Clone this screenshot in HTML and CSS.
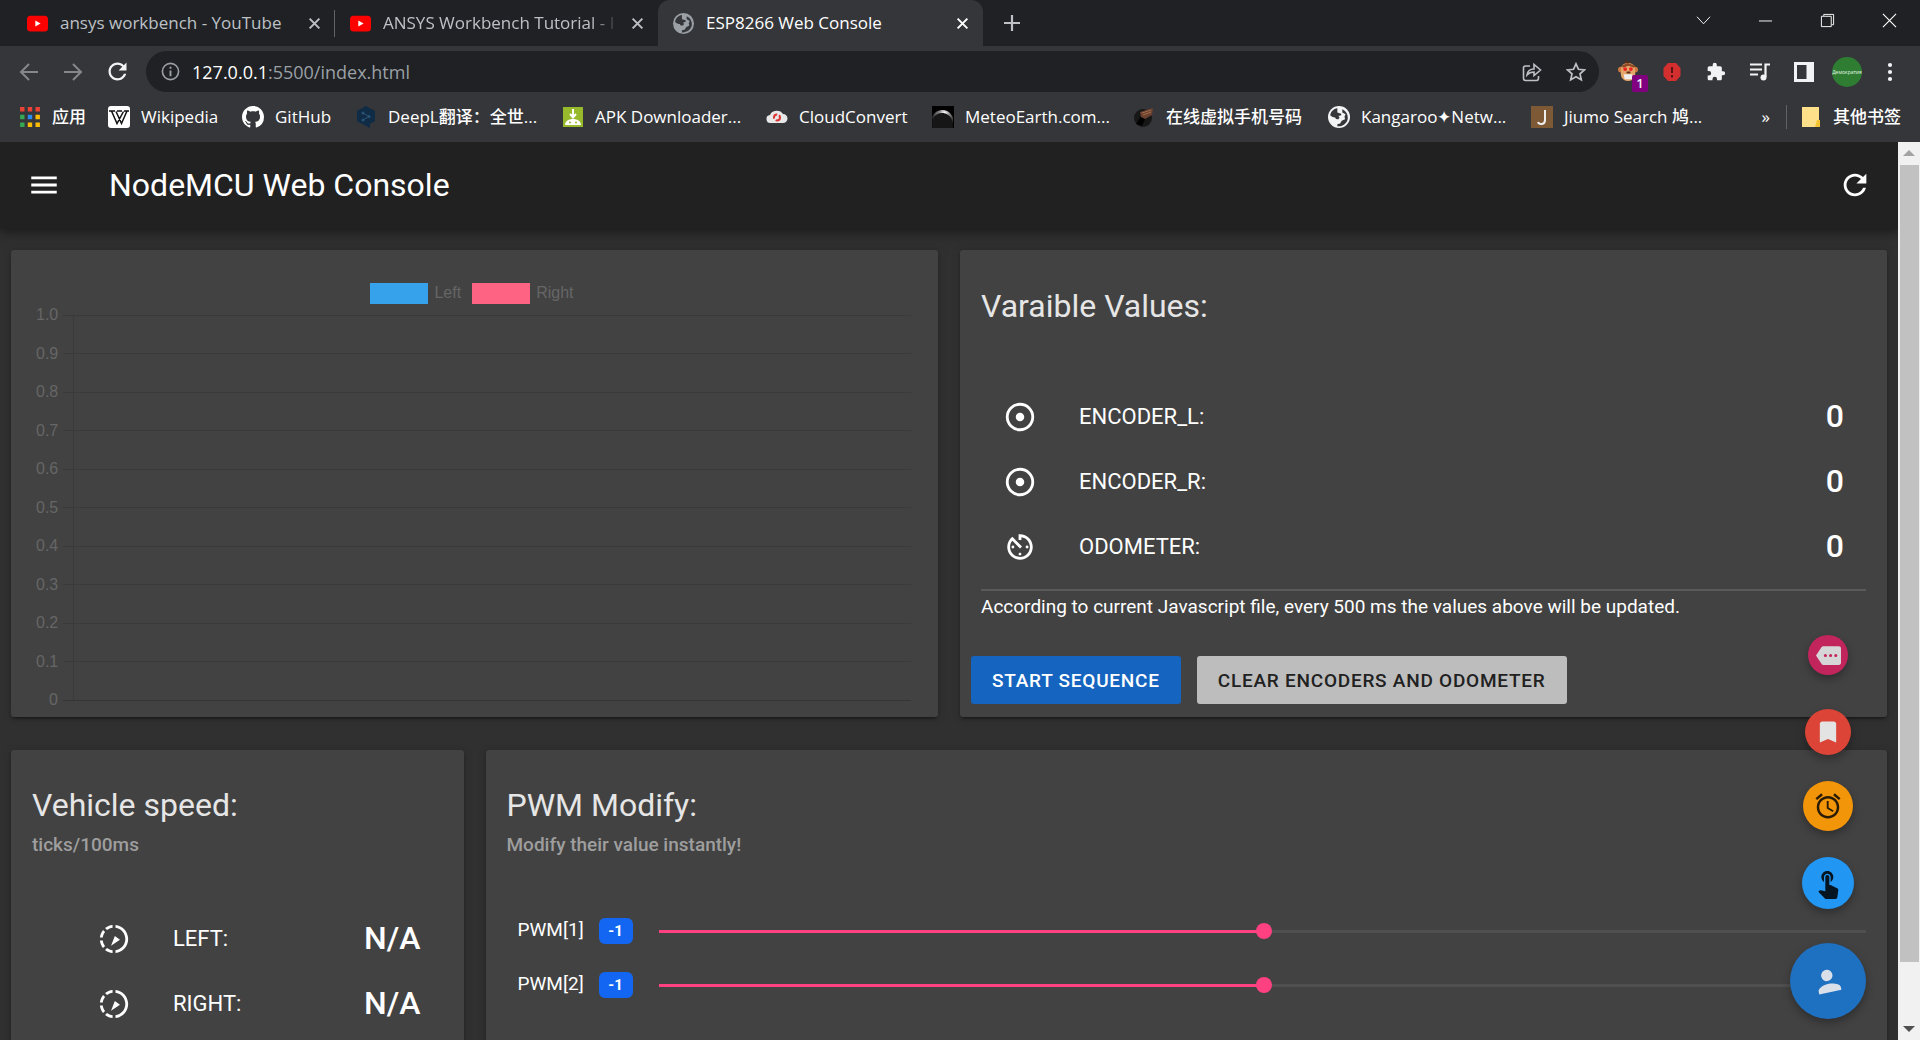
FILE: index.html
```html
<!DOCTYPE html>
<html lang="en">
<head>
<meta charset="utf-8">
<title>ESP8266 Web Console</title>
<link rel="stylesheet" href="styles.css">
</head>
<body>
<svg class="defs" aria-hidden="true">
  <defs>
    <symbol id="youtube" viewBox="0 0 24 24"><rect y="3" width="24" height="18" rx="4" fill="#f00"/><path d="M9.500 8.500v7l6-3.500z" fill="#fff"/></symbol>
    <symbol id="cross" viewBox="0 0 12 12"><path d="M1.500 1.500l9 9m0-9l-9 9" fill="none" stroke="currentColor" stroke-width="1.800"/></symbol>
    <symbol id="globe" viewBox="0 0 20 20"><circle cx="10" cy="10" r="10" fill="currentColor"/><path d="M8.500 2c-3.500.6-6 3-6.500 6.500 1.500 1.500 3 1.800 4.500 2 .4 1.500 1.500 1.500 3 1.500l1-1.500-1-1.500 2.500-.5V7L8.500 6zM13 3v3l3 1.500-1 2 .5 2.500-3 1.500-1.500 2.500-2.500.5v2c4.500.3 8.500-2.500 9.400-6.500C18.500 8 16.500 4.500 13 3z" class="globe-land"/></symbol>
    <symbol id="refresh" viewBox="0 0 24 24"><path fill="currentColor" d="M17.650 6.350C16.200 4.900 14.210 4 12 4c-4.420 0-7.990 3.580-7.990 8s3.570 8 7.990 8c3.730 0 6.840-2.550 7.730-6h-2.080c-.820 2.330-3.040 4-5.650 4-3.310 0-6-2.690-6-6s2.690-6 6-6c1.660 0 3.140.690 4.220 1.780L13 11h7V4l-2.350 2.350z"/></symbol>
    <symbol id="adjust" viewBox="0 0 24 24"><circle cx="12" cy="12" r="9" fill="none" stroke="currentColor" stroke-width="2"/><circle cx="12" cy="12" r="3" fill="currentColor"/></symbol>
    <symbol id="slow" viewBox="0 0 24 24"><path fill="currentColor" d="M11 4.070V2.050c-2.010.200-3.840 1-5.320 2.210L7.100 5.690c1.110-.860 2.440-1.440 3.900-1.620zM5.690 7.100L4.260 5.680C3.050 7.160 2.250 8.990 2.050 11h2.020c.180-1.460.760-2.790 1.620-3.900zM4.070 13H2.050c.200 2.010 1 3.840 2.210 5.320l1.430-1.430c-.860-1.100-1.440-2.430-1.620-3.890zm1.610 6.740C7.160 20.950 9 21.750 11 21.950v-2.020c-1.460-.180-2.790-.760-3.900-1.620l-1.420 1.430zM22 12c0 5.160-3.920 9.420-8.950 9.950v-2.020C16.970 19.410 20 16.050 20 12s-3.030-7.410-6.950-7.930V2.050C18.080 2.580 22 6.840 22 12zM9.900 16.800l2.700-7 3.600 2.700z"/></symbol>
  </defs>
</svg>

<div class="browser">
  <div class="tabstrip">
    <div class="tab tab-split">
      <svg class="favicon"><use href="#youtube"/></svg>
      <span class="tab-title">ansys workbench - YouTube</span>
      <button class="tab-close" aria-label="Close tab"><svg><use href="#cross"/></svg></button>
    </div>
    <div class="tab">
      <svg class="favicon"><use href="#youtube"/></svg>
      <span class="tab-title tab-fade">ANSYS Workbench Tutorial - I</span>
      <button class="tab-close" aria-label="Close tab"><svg><use href="#cross"/></svg></button>
    </div>
    <div class="tab tab-active">
      <svg class="favicon globe-grey"><use href="#globe"/></svg>
      <span class="tab-title">ESP8266 Web Console</span>
      <button class="tab-close" aria-label="Close tab"><svg><use href="#cross"/></svg></button>
    </div>
    <button class="new-tab" aria-label="New tab"><svg viewBox="0 0 16 16"><path d="M8 0v16M0 8h16" stroke="currentColor" stroke-width="2.200"/></svg></button>
    <div class="window-controls">
      <button aria-label="Search tabs"><svg viewBox="0 0 16 16"><path d="M1 4l7 7.500L15 4" fill="none" stroke="currentColor"/></svg></button>
      <button aria-label="Minimise"><svg viewBox="0 0 16 16"><path d="M1 8.500h14" stroke="currentColor"/></svg></button>
      <button aria-label="Restore"><svg viewBox="0 0 16 16"><path d="M1.500 3.500h10.500v11H1.500zM4 3V1.500h10.500v11H12.500" fill="none" stroke="currentColor"/></svg></button>
      <button aria-label="Close window"><svg viewBox="0 0 16 16"><path d="M1 1l14 14M15 1L1 15" stroke="currentColor" stroke-width="1.200"/></svg></button>
    </div>
  </div>

  <div class="toolbar">
    <button class="tool dim" aria-label="Back"><svg viewBox="0 0 20 20"><path d="M19 10H2m8-8l-8 8 8 8" fill="none" stroke="currentColor" stroke-width="2"/></svg></button>
    <button class="tool dim" aria-label="Forward"><svg viewBox="0 0 20 20"><path d="M1 10h17m-8-8l8 8-8 8" fill="none" stroke="currentColor" stroke-width="2"/></svg></button>
    <button class="tool reload" aria-label="Reload"><svg><use href="#refresh"/></svg></button>
    <div class="omnibox">
      <svg class="info" viewBox="0 0 20 20"><circle cx="10" cy="10" r="8.500" fill="none" stroke="currentColor" stroke-width="1.700"/><path d="M10 9v6M10 5v2" stroke="currentColor" stroke-width="2"/></svg>
      <span class="url"><b>127.0.0.1</b>:5500/index.html</span>
      <button class="tool light" aria-label="Share"><svg viewBox="0 0 20 20"><path d="M8 4H3.500C2 4 1.500 4.500 1.500 6v10c0 1.500.5 2.500 2 2.500h11c1.500 0 2-1 2-2.500v-2M5 13c.5-4 3-6 7-6V2.500L18.500 8 12 13.500V10c-3 0-5 .7-7 3z" fill="none" stroke="currentColor" stroke-width="1.600"/></svg></button>
      <button class="tool light" aria-label="Bookmark this page"><svg viewBox="0 0 20 20"><path d="M10 1.800l2.500 5.500 6 .6-4.500 4 1.300 5.900L10 14.700l-5.300 3.100L6 11.900l-4.500-4 6-.6z" fill="none" stroke="currentColor" stroke-width="1.700"/></svg></button>
    </div>
    <button class="tool monkey" aria-label="Extension, 1 active">
      <svg viewBox="0 0 22 24"><path d="M9 0l2 3 3-2-1 3h-4L6 3z" fill="#5a2d17"/><circle cx="3" cy="10" r="3" fill="#c9793f"/><circle cx="18" cy="10" r="3" fill="#c9793f"/><rect x="3" y="3" width="15" height="19" rx="7" fill="#e5a66a"/><path d="M4 6l6-3 8 3-1 2-6-2-6 2z" fill="#8c4a24"/><circle cx="7.500" cy="9.500" r="2" fill="#e22"/><circle cx="13.500" cy="9.500" r="2" fill="#e22"/><path d="M6 15h9v5H7z" fill="#eee"/><path d="M9 13h4" stroke="#5a2d17" stroke-width="2"/></svg>
      <span class="badge-count">1</span>
    </button>
    <button class="tool" aria-label="Blocked"><svg viewBox="0 0 20 20"><path d="M6 1h8l4.500 5v8L14 19H6l-4.500-5V6z" fill="#d32f2f"/><path d="M10 5v6m0 2v2.500" stroke="#5b1414" stroke-width="2"/></svg></button>
    <button class="tool" aria-label="Extensions"><svg viewBox="0 0 24 24"><path fill="currentColor" d="M20.500 11H19V7c0-1.100-.9-2-2-2h-4V3.500a2.500 2.500 0 0 0-5 0V5H4c-1.100 0-2 .9-2 2v3.800h1.500a2.700 2.700 0 0 1 0 5.400H2V20c0 1.100.9 2 2 2h3.800v-1.500a2.700 2.700 0 0 1 5.400 0V22H17c1.100 0 2-.9 2-2v-4h1.500a2.500 2.500 0 0 0 0-5z"/></svg></button>
    <button class="tool" aria-label="Media"><svg viewBox="0 0 20 20"><path d="M0 2.500h12M0 7.500h12M0 12.500h8M15.500 15V2.500H20" fill="none" stroke="currentColor" stroke-width="2.200"/><circle cx="13.500" cy="15.500" r="3" fill="currentColor"/></svg></button>
    <button class="tool" aria-label="Side panel"><svg viewBox="0 0 20 20"><path fill="currentColor" fill-rule="evenodd" d="M0 0h20v20H0zM3 3v14h9.500V3z"/></svg></button>
    <button class="avatar" aria-label="Profile">Демократия</button>
    <button class="tool dots" aria-label="Menu"><svg viewBox="0 0 20 20"><g fill="currentColor"><circle cx="10" cy="3" r="2.100"/><circle cx="10" cy="10" r="2.100"/><circle cx="10" cy="17" r="2.100"/></g></svg></button>
  </div>

  <nav class="bookmarks">
    <a href="#"><svg viewBox="0 0 20 20"><path d="M1 1h4v4H1zM8 1h4v4H8zM15 1h4v4h-4z" fill="#ea4335"/><path d="M1 8h4v4H1zM1 15h4v4H1z" fill="#34a853"/><path d="M8 8h4v4H8z" fill="#2b8af0"/><path d="M15 8h4v4h-4zM8 15h4v4H8zM15 15h4v4h-4z" fill="#fbbc04"/></svg><span>应用</span></a>
    <a href="#"><svg viewBox="0 0 22 22"><rect width="22" height="22" rx="3" fill="#fff"/><path d="M1 5h6M9 5h5M16 5h5M3.500 5l5.500 12.500L15.500 5.500M8 5.500L13.500 17.500 19 5" fill="none" stroke="#111" stroke-width="1.500"/></svg><span>Wikipedia</span></a>
    <a href="#"><svg viewBox="0 0 16 16"><path fill="#fff" d="M8 0C3.580 0 0 3.580 0 8c0 3.540 2.290 6.530 5.470 7.590.400.070.550-.170.550-.380 0-.190-.010-.820-.010-1.490-2.010.370-2.530-.490-2.690-.940-.090-.230-.480-.940-.820-1.130-.280-.150-.680-.520-.010-.530.630-.010 1.080.580 1.230.820.720 1.210 1.870.870 2.330.660.070-.520.280-.870.510-1.070-1.780-.200-3.640-.890-3.640-3.950 0-.870.310-1.590.820-2.150-.080-.200-.360-1.020.080-2.120 0 0 .670-.210 2.200.820.640-.180 1.320-.270 2-.270s1.360.090 2 .270c1.530-1.040 2.200-.820 2.200-.820.440 1.100.160 1.920.080 2.120.510.560.820 1.270.820 2.150 0 3.070-1.870 3.750-3.650 3.950.290.250.540.730.540 1.480 0 1.070-.010 1.930-.010 2.200 0 .210.150.460.550.380A8.010 8.010 0 0 0 16 8c0-4.420-3.580-8-8-8z"/></svg><span>GitHub</span></a>
    <a href="#"><svg viewBox="0 0 22 22"><path d="M11 0l9 5v10l-5 3v4l-4-2-9-5V5z" fill="#0f2b46"/><path d="M8 7l6 3.500L8 14" fill="none" stroke="#2c5273"/><g fill="#2c5273"><circle cx="8" cy="7" r="1.500"/><circle cx="14" cy="10.500" r="1.500"/><circle cx="8" cy="14" r="1.500"/></g></svg><span>DeepL翻译：全世...</span></a>
    <a href="#"><svg viewBox="0 0 22 22"><rect x="1" y="1" width="20" height="20" fill="#97b92c"/><path d="M11 3v7M8 8l3 3.500L14 8" stroke="#fff" stroke-width="2" fill="none"/><path d="M3 19c0-8 16-8 16 0z" fill="#fff"/><circle cx="8" cy="16.500" r="1" fill="#97b92c"/><circle cx="14" cy="16.500" r="1" fill="#97b92c"/></svg><span>APK Downloader...</span></a>
    <a href="#"><svg viewBox="0 0 22 22"><path d="M5 17a4 4 0 0 1-1-8 7 6 0 0 1 13-1 4.500 4.500 0 0 1 0 9z" fill="#e8e8e8"/><circle cx="11" cy="11.500" r="3" fill="none" stroke="#d33" stroke-width="2" stroke-dasharray="6 2"/></svg><span>CloudConvert</span></a>
    <a href="#"><svg viewBox="0 0 22 22"><defs><radialGradient id="moon" cx=".6" cy=".15" r=".7"><stop offset="0" stop-color="#fff"/><stop offset=".35" stop-color="#888"/><stop offset="1" stop-color="#111"/></radialGradient></defs><rect width="22" height="22" fill="#000"/><path d="M0 22V11C4 2 17 1 21 12v10z" fill="url(#moon)"/><path d="M1 22V13C5 5 16 5 20 14v8z" fill="#161616"/></svg><span>MeteoEarth.com...</span></a>
    <a href="#"><svg viewBox="0 0 22 22"><circle cx="10" cy="12" r="9" fill="#171717"/><path d="M3 18L9 9l4 2-4 9z" fill="#000"/><path d="M7 6l13-4-1 7-7 4-4-2z" fill="#6b4230"/><path d="M9 7l9-3M10 9l8-3" stroke="#a36a4a"/></svg><span>在线虚拟手机号码</span></a>
    <a href="#"><svg class="globe-white"><use href="#globe"/></svg><span>Kangaroo✦Netw...</span></a>
    <a href="#"><svg viewBox="0 0 22 22"><rect width="22" height="22" fill="#7d5a35"/><path d="M14 4v10c0 5-6 5-7 2" fill="none" stroke="#eee" stroke-width="2"/></svg><span>Jiumo Search 鸠...</span></a>
    <button class="more" aria-label="More bookmarks">»</button>
    <a class="other" href="#"><svg viewBox="0 0 22 22"><path d="M2 1h17v15h-2v5H2z" fill="#ffe08a"/><path d="M17 14h3v7h-5z" fill="#f4c430"/></svg><span>其他书签</span></a>
  </nav>
</div>

<div class="viewport">
  <div class="page">
    <header class="appbar">
      <button class="icon-button" aria-label="Open menu"><svg viewBox="0 0 24 24"><path fill="currentColor" d="M3 18h18v-2H3v2zm0-5h18v-2H3v2zm0-7v2h18V6H3z"/></svg></button>
      <h1>NodeMCU Web Console</h1>
      <button class="icon-button" aria-label="Refresh"><svg><use href="#refresh"/></svg></button>
    </header>

    <main class="content">
      <section class="card chart" aria-label="Wheel speed chart">
        <div class="legend">
          <span class="swatch swatch-left"></span><span>Left</span>
          <span class="swatch swatch-right"></span><span>Right</span>
        </div>
        <ul class="axis">
          <li>1.0</li><li>0.9</li><li>0.8</li><li>0.7</li><li>0.6</li><li>0.5</li><li>0.4</li><li>0.3</li><li>0.2</li><li>0.1</li><li>0</li>
        </ul>
      </section>

      <section class="card values">
        <h2>Varaible Values:</h2>
        <ul class="readings">
          <li><svg><use href="#adjust"/></svg><span>ENCODER_L:</span><strong>0</strong></li>
          <li><svg><use href="#adjust"/></svg><span>ENCODER_R:</span><strong>0</strong></li>
          <li><svg viewBox="0 0 24 24"><path fill="currentColor" d="M11 17c0 .550.450 1 1 1s1-.450 1-1-.450-1-1-1-1 .450-1 1zm0-14v4h2V5.080c3.390.490 6 3.390 6 6.920 0 3.870-3.130 7-7 7s-7-3.130-7-7c0-1.680.590-3.220 1.580-4.420L12 13l1.410-1.410-6.800-6.800v.020C4.420 6.450 3 9.050 3 12c0 4.970 4.020 9 9 9 4.970 0 9-4.030 9-9s-4.030-9-9-9h-1zm7 9c0-.550-.450-1-1-1s-1 .450-1 1 .450 1 1 1 1-.450 1-1zM6 12c0 .550.450 1 1 1s1-.450 1-1-.450-1-1-1-1 .450-1 1z"/></svg><span>ODOMETER:</span><strong>0</strong></li>
        </ul>
        <p class="note">According to current Javascript file, every 500 ms the values above will be updated.</p>
        <div class="actions">
          <button class="btn btn-primary">START SEQUENCE</button>
          <button class="btn">CLEAR ENCODERS AND ODOMETER</button>
        </div>
      </section>

      <section class="card speed">
        <h2>Vehicle speed:</h2>
        <p class="subtitle">ticks/100ms</p>
        <ul class="readings">
          <li><svg><use href="#slow"/></svg><span>LEFT:</span><strong>N/A</strong></li>
          <li><svg><use href="#slow"/></svg><span>RIGHT:</span><strong>N/A</strong></li>
        </ul>
      </section>

      <section class="card pwm">
        <h2>PWM Modify:</h2>
        <p class="subtitle">Modify their value instantly!</p>
        <div class="sliders">
          <div class="slider-row"><label for="pwm1">PWM[1]</label><output for="pwm1">-1</output><input id="pwm1" type="range" min="-500" max="495" value="-1"></div>
          <div class="slider-row"><label for="pwm2">PWM[2]</label><output for="pwm2">-1</output><input id="pwm2" type="range" min="-500" max="495" value="-1"></div>
        </div>
      </section>
    </main>

    <div class="fabs">
      <button class="fab fab-more" aria-label="More"><svg viewBox="0 0 24 24"><path fill="currentColor" fill-rule="evenodd" d="M22 3H7c-.690 0-1.230.350-1.590.880L0 12l5.410 8.110c.360.530.970.890 1.660.890H22c1.100 0 2-.900 2-2V5c0-1.100-.900-2-2-2zM9 13.500a1.500 1.500 0 1 1 0-3 1.500 1.500 0 0 1 0 3zm5 0a1.500 1.500 0 1 1 0-3 1.500 1.500 0 0 1 0 3zm5 0a1.500 1.500 0 1 1 0-3 1.500 1.500 0 0 1 0 3z"/></svg></button>
      <button class="fab fab-bookmark" aria-label="Bookmark"><svg viewBox="0 0 24 24"><path fill="currentColor" d="M17 3H7c-1.100 0-1.990.900-1.990 2L5 21l7-3 7 3V5c0-1.100-.900-2-2-2z"/></svg></button>
      <button class="fab fab-alarm" aria-label="Alarm"><svg viewBox="0 0 24 24"><path fill="currentColor" d="M22 5.720l-4.600-3.860-1.290 1.530 4.600 3.860L22 5.720zM7.880 3.390L6.600 1.860 2 5.710l1.290 1.530 4.590-3.850zM12.500 8H11v6l4.750 2.850.750-1.230-4-2.370V8zM12 4c-4.970 0-9 4.030-9 9s4.020 9 9 9c4.970 0 9-4.030 9-9s-4.030-9-9-9zm0 16c-3.870 0-7-3.130-7-7s3.130-7 7-7 7 3.130 7 7-3.130 7-7 7z"/></svg></button>
      <button class="fab fab-touch" aria-label="Touch"><svg viewBox="0 0 24 24"><path fill="currentColor" d="M9 11.240V7.500C9 6.120 10.120 5 11.500 5S14 6.120 14 7.500v3.740c1.210-.810 2-2.180 2-3.740C16 5.010 13.990 3 11.500 3S7 5.010 7 7.500c0 1.560.790 2.930 2 3.740zm9.840 4.630l-4.540-2.260c-.170-.070-.350-.110-.540-.110H13v-6c0-.830-.670-1.500-1.500-1.500S10 6.670 10 7.500v10.740l-3.430-.720c-.080-.010-.150-.030-.240-.030-.310 0-.590.130-.790.330l-.790.800 4.940 4.940c.270.270.650.440 1.060.440h6.790c.750 0 1.330-.550 1.440-1.280l.750-5.270c.010-.070.020-.140.020-.200 0-.620-.380-1.160-.910-1.380z"/></svg></button>
      <button class="fab fab-main" aria-label="Account"><svg viewBox="0 0 24 24"><path transform="rotate(-12 12 12)" fill="currentColor" d="M12 12c2.210 0 4-1.790 4-4s-1.790-4-4-4-4 1.790-4 4 1.790 4 4 4zm0 2c-2.670 0-8 1.340-8 4v2h16v-2c0-2.660-5.330-4-8-4z"/></svg></button>
    </div>
  </div>
  <div class="scrollbar" aria-hidden="true">
    <svg viewBox="0 0 22 22"><path d="M5 14l6-6 6 6z" fill="#a3a3a3"/></svg>
    <div class="scroll-track"><div class="scroll-thumb"></div></div>
    <svg viewBox="0 0 22 22"><path d="M5 8l6 6 6-6z" fill="#505050"/></svg>
  </div>
</div>
</body>
</html>
```
FILE: styles.css
```css
* { box-sizing: border-box; }

body {
  margin: 0;
  height: 100vh;
  overflow: hidden;
  display: flex;
  flex-direction: column;
  background: #303030;
  color: #fff;
  font-family: Roboto, "Noto Sans CJK SC", sans-serif;
}

h1, h2, p, ul { margin: 0; padding: 0; font-weight: 400; }
ul { list-style: none; }
svg { display: block; flex: none; }
.defs { position: absolute; width: 0; height: 0; }

button {
  padding: 0;
  border: 0;
  background: none;
  color: inherit;
  font: inherit;
}

/* Browser frame */
.browser {
  flex: none;
  background: #35363a;
  font-family: "Open Sans", "Noto Sans CJK SC", sans-serif;
  font-size: 17px;
  line-height: 24px;
}

.tabstrip {
  display: flex;
  height: 46px;
  padding-left: 12px;
  background: #202124;
}

.tab {
  position: relative;
  display: flex;
  align-items: center;
  width: 323px;
  padding: 0 10px 0 15px;
  color: #bdc1c6;
}

.tab-split::after {
  content: "";
  position: absolute;
  right: 0;
  top: 10px;
  width: 1px;
  height: 27px;
  background: #5f6368;
}

.tab-active {
  width: 325px;
  border-radius: 12px 12px 0 0;
  background: #35363a;
  color: #fff;
  font-weight: 500;
}

.favicon { width: 21px; height: 21px; margin-right: 12px; }
.globe-grey { color: #9aa0a6; fill: #35363a; }
.globe-white { color: #f1f3f4; fill: #35363a; }
.tab-title { flex: 1; white-space: nowrap; }
.tab-fade { mask-image: linear-gradient(90deg, #000 88%, transparent); }
.tab-close { display: flex; padding: 4px; margin-left: 8px; }
.tab-close svg { width: 13px; height: 13px; }
.new-tab { display: flex; align-items: center; padding: 0 21px; color: #bdc1c6; }
.new-tab svg { width: 16px; height: 16px; }
.window-controls { display: flex; height: 40px; margin-left: auto; }
.window-controls button { display: flex; align-items: center; justify-content: center; width: 62px; }
.window-controls svg { width: 15px; height: 15px; }

.toolbar {
  display: flex;
  align-items: center;
  height: 51px;
  padding: 0 8px 0 7px;
}

.tool {
  position: relative;
  display: flex;
  align-items: center;
  justify-content: center;
  flex: none;
  width: 44px;
  height: 41px;
  color: #f1f3f4;
}

.tool svg { width: 20px; height: 20px; }
.tool.reload svg { width: 27px; height: 27px; }
.tool.dim { color: #85878a; }
.tool.light { color: #bdc1c6; }
.tool.monkey { width: 43px; margin-left: 8px; }
.monkey svg { width: 21px; height: 23px; }

.badge-count {
  position: absolute;
  left: 25px;
  bottom: 0;
  width: 16px;
  height: 17px;
  border-radius: 2px;
  background: #800080;
  font-size: 13px;
  font-weight: 600;
  line-height: 17px;
}

.omnibox {
  display: flex;
  align-items: center;
  flex: 1;
  height: 41px;
  margin-left: 7px;
  padding: 0 1px 0 15px;
  border-radius: 21px;
  background: #202124;
}

.info { width: 19px; height: 19px; color: #9aa0a6; }
.url { flex: 1; margin-left: 12px; color: #9aa0a6; font-size: 18px; }
.url b { color: #fff; font-weight: 500; }

.avatar {
  width: 30px;
  height: 30px;
  margin: 0 6px;
  border-radius: 50%;
  background: #2e7d32;
  color: #e8f5e9;
  font-size: 5px;
  line-height: 30px;
  overflow: hidden;
}

.bookmarks {
  display: grid;
  grid-template-columns: 89px 134px 113px 207px 204px 166px 201px 195px 203px 210px 1fr auto;
  align-items: center;
  height: 45px;
  padding: 0 19px 5px;
  font-weight: 500;
}

.bookmarks a {
  display: flex;
  align-items: center;
  gap: 11px;
  color: #fff;
  text-decoration: none;
  white-space: nowrap;
}

.bookmarks svg { width: 22px; height: 22px; }
.bookmarks .more { justify-self: end; padding-right: 16px; }
.bookmarks .other { padding-left: 13px; border-left: 1px solid #5f6368; }

/* Page viewport */
.viewport { display: flex; flex: 1; min-height: 0; }
.page { position: relative; flex: 1; min-width: 0; overflow: hidden; }

.scrollbar {
  display: flex;
  flex-direction: column;
  width: 22px;
  background: #f1f1f1;
}

.scrollbar svg { width: 22px; height: 22px; }
.scroll-track { flex: 1; padding: 1px 1px 0 2px; }
.scroll-thumb { height: calc(100% - 56px); background: #c1c1c1; }

.appbar {
  position: relative;
  z-index: 1;
  display: flex;
  align-items: center;
  height: 87px;
  padding: 0 11px 2px;
  background: #212121;
  box-shadow: 0 3px 6px rgba(0, 0, 0, .25), 0 6px 14px rgba(0, 0, 0, .2);
}

.appbar h1 { flex: 1; margin-left: 33px; font-size: 32px; line-height: 44px; }

.icon-button {
  display: flex;
  align-items: center;
  justify-content: center;
  width: 65px;
  height: 65px;
}

.icon-button svg { width: 34px; height: 34px; }

.content {
  display: grid;
  grid-template-columns: repeat(4, 1fr);
  gap: 33px 22px;
  padding: 21px 11px;
}

.card {
  border-radius: 3px;
  background: #424242;
  box-shadow: 0 4px 2px -3px rgba(0, 0, 0, .3), 0 2px 3px rgba(0, 0, 0, .2), 0 1px 8px rgba(0, 0, 0, .15);
}

.card h2 { color: #e6e6e6; font-size: 32px; line-height: 44px; }
.chart, .values { grid-column: span 2; }
.pwm { grid-column: span 3; }

/* Chart */
.chart {
  padding: 32px 27px 8px 25px;
  color: #666;
  font-family: "Liberation Sans", Arial, sans-serif;
  font-size: 16px;
  line-height: 18px;
}

.legend { display: flex; align-items: center; justify-content: center; height: 22px; padding-left: 8px; }
.legend span { margin-right: 11px; }
.legend .swatch { width: 58px; height: 21px; margin-right: 6px; }
.swatch-left { background: #36a2eb; }
.swatch-right { background: #ff6384; }

.axis {
  position: relative;
  display: flex;
  flex-direction: column;
  justify-content: space-between;
  height: 403px;
  margin-top: 2px;
}

.axis li { display: flex; align-items: center; justify-content: flex-end; height: 18px; }
.axis li::after { content: ""; width: calc(100% - 27px); height: 1px; margin-left: 5px; background: #3a3a3a; }
.axis li:last-child::after { background: #353535; }
.axis::before { content: ""; position: absolute; left: 37px; top: 9px; bottom: 9px; width: 1px; background: #3a3a3a; }

/* Readings */
.values { padding: 34px 21px 11px; }
.readings { display: flex; flex-direction: column; }
.readings li { display: flex; align-items: center; height: 65px; padding: 0 22px; }
.readings svg { width: 34px; height: 34px; }
.readings span { flex: 1; margin-left: 42px; font-size: 22px; }
.readings strong { padding-bottom: 2px; font-size: 32px; font-weight: 500; }
.values .readings { margin-top: 56px; padding-bottom: 10px; border-bottom: 2px solid #5a5a5a; }
.note { margin-top: 2px; font-size: 19px; line-height: 28px; }
.actions { display: flex; gap: 16px; margin: 35px 0 0 -10px; }

.btn {
  height: 48px;
  padding: 0 21px;
  border-radius: 3px;
  background: #bdbdbd;
  color: #212121;
  font-size: 19px;
  font-weight: 500;
  letter-spacing: .04em;
}

.btn-primary { background: #1565c0; color: #fff; }

.speed, .pwm { padding: 33px 21px 40px; }
.subtitle { margin-top: 5px; color: #9e9e9e; font-size: 19px; font-weight: 500; line-height: 26px; }
.speed .readings { margin-top: 48px; }
.speed .readings li { padding: 0 22px 0 65px; }

.sliders { margin-top: 46px; padding-left: 11px; }
.slider-row { display: flex; align-items: center; height: 54px; font-size: 19px; }
.slider-row label { width: 65px; padding-bottom: 4px; }

.slider-row output {
  width: 34px;
  height: 26px;
  margin: 0 26px 0 16px;
  border-radius: 6px;
  background: #1266f1;
  font-size: 15px;
  font-weight: 700;
  line-height: 26px;
  text-align: center;
}

.slider-row input {
  appearance: none;
  flex: 1;
  height: 16px;
  margin: 0;
  background: linear-gradient(90deg, #ff4081 50%, #4f4f4f 50%) center / 100% 3px no-repeat;
}

.slider-row input::-webkit-slider-thumb {
  appearance: none;
  width: 16px;
  height: 16px;
  border-radius: 50%;
  background: #ff4081;
}

/* Floating actions */
.fabs {
  position: absolute;
  right: 32px;
  bottom: 21px;
  display: flex;
  flex-direction: column;
  align-items: center;
  gap: 26px;
}

.fab {
  display: flex;
  align-items: center;
  justify-content: center;
  border-radius: 50%;
  box-shadow: 0 4px 8px rgba(0, 0, 0, .3);
}

.fab-more { width: 40px; height: 40px; margin-bottom: 8px; background: #c2255c; color: #d6d6d6; }
.fab-more svg { width: 25px; height: 25px; }
.fab-bookmark { width: 46px; height: 46px; background: #db4437; color: #e3e3e3; }
.fab-bookmark svg { width: 28px; height: 28px; }
.fab-alarm { width: 50px; height: 50px; background: #f39508; color: #2b1c05; }
.fab-alarm svg { width: 30px; height: 30px; }
.fab-touch { width: 52px; height: 52px; background: #2196f3; color: #041420; }
.fab-touch svg { width: 32px; height: 32px; }
.fab-main { width: 76px; height: 76px; margin-top: 8px; background: #1e70c1; color: #d9e0ea; }
.fab-main svg { width: 34px; height: 34px; }
```
